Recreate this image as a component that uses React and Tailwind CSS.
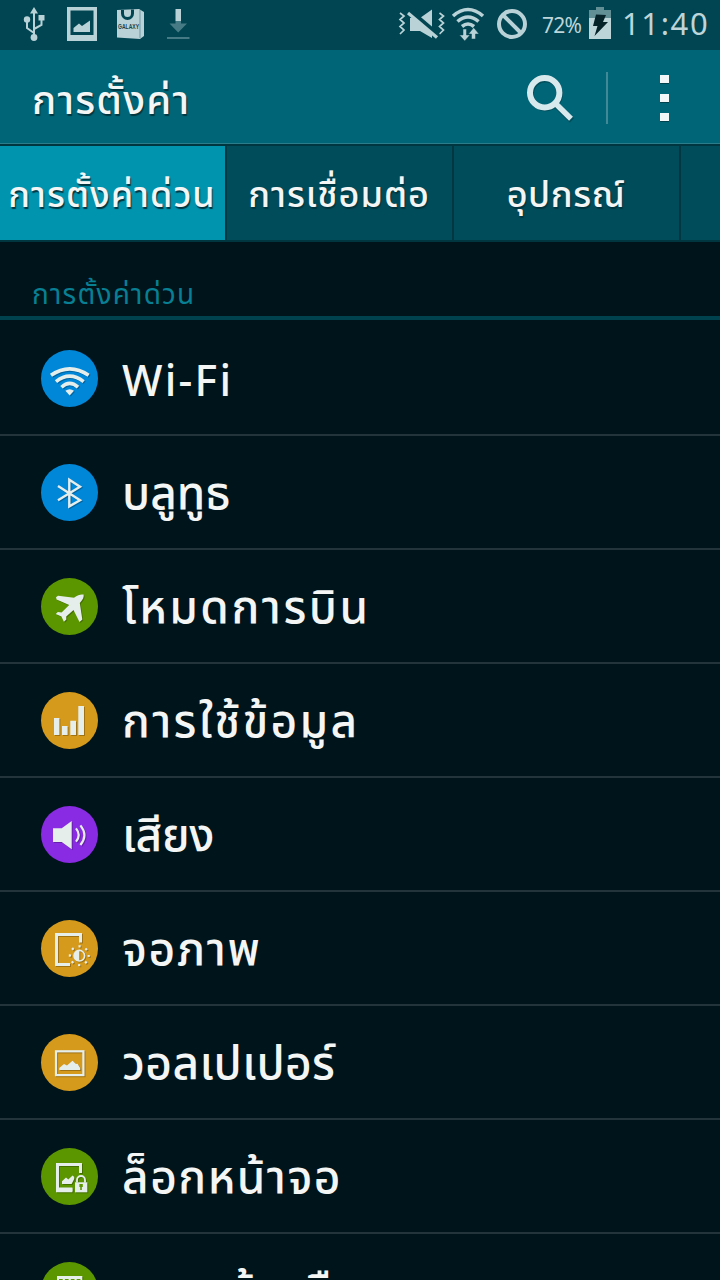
const thai = "font-['Noto_Sans_Thai','Noto_Sans',sans-serif]";

const ink = '#e6eeec';

function Wifi() {
  return (
    <g fill="none" stroke={ink} strokeWidth="3.6">
      <path d="M10 25.2Q28.7 12.4 47.6 25.2" />
      <path d="M15 31.6Q28.7 20.6 42.6 31.6" />
      <path d="M20.5 37.2Q28.7 29.6 37 37.2" />
      <path d="M24.4 40.8Q28.7 37.6 33 40.8L28.7 45.4Z" fill={ink} stroke="none" />
    </g>
  );
}
function Bluetooth() {
  return <path d="M17 22L39 36.3L28.3 42.4V15.8L39 22.7L17 36.3" fill="none" stroke={ink} strokeWidth="2.4" />;
}
function Plane() {
  return (
    <path fill={ink} d="M42.6 16.6C43 19.4 42 21.6 38.8 25L41.3 41.6L38.5 44L32.5 32L25.2 38.4L25.3 41.4L22.9 43.8L20.4 38.6L14.8 36L16.8 34L20.6 34.4L28.2 27L15.6 21.4L15 19.2L17 17.8L33 19.8C37 16.8 40 16 42.6 16.6Z" />
  );
}
function Bars() {
  return <path fill={ink} d="M13 26h5.4v17H13zM21 34h5.6v9H21zM29.3 28.7H35V43h-5.7zM37.3 14H43v29h-5.7z" />;
}
function Sound() {
  return (
    <g>
      <path d="M12 22.3h8.7L30.7 15v28.3L20.7 36H12z" fill={ink} />
      <path d="M35 22.4q5.4 6.6 0 13.2M39.4 19.4q8 9.8 0 19.6" fill="none" stroke={ink} strokeWidth="2.2" />
    </g>
  );
}
function Display() {
  return (
    <g fill="none" stroke={ink}>
      <path d="M39.5 22.6V14.6H15.5V44.4H29" strokeWidth="3" />
      <circle cx="38.3" cy="35.7" r="5.3" strokeWidth="1.6" />
      <path d="M38.3 30.4a5.300 5.300 0 0 0 0 10.600z" fill={ink} stroke="none" />
      <circle cx="38.3" cy="35.7" r="9.4" strokeWidth="2.200" strokeDasharray="2.200 5.183" strokeDashoffset="1.100" />
    </g>
  );
}
function Wallpaper() {
  return (
    <g>
      <rect x="15" y="17.3" width="27.4" height="23.8" fill="none" stroke={ink} strokeWidth="2.2" />
      <path d="M18.3 36V34L23 30L26 31.5L31.5 26.8L35 30L36.5 29.8L39.2 34V36Z" fill={ink} />
    </g>
  );
}
function Lock() {
  return (
    <g>
      <path d="M39.5 25V16.5H16.5V41.8H31.4" fill="none" stroke={ink} strokeWidth="3" />
      <path d="M15 39.4H31.4V44.3H15zM21 36V33.3L25 29.6L27.3 31.6L31.6 27.6L33.2 29V31L30.6 36Z" fill={ink} />
      <path d="M36 34.4V32a4 4 0 0 1 8 0v2.4" fill="none" stroke={ink} strokeWidth="1.8" />
      <path d="M34 34.3H46.3V44.3H34z" fill={ink} />
      <path d="M38.4 36h3.4v3h-1v3h-1.6v-3h-.8z" fill="#5b9600" />
    </g>
  );
}
function Panel() {
  return (
    <g>
      <path d="M16 14h25.3v30H16z" fill={ink} />
      <path d="M18 18.4h21.4" stroke="#5b9600" strokeWidth="2.8" strokeDasharray="3.7 2.2" />
    </g>
  );
}

const rows = [
  { label: 'Wi-Fi', Icon: Wifi, bg: 'bg-[#0087d8]', text: "font-['Noto_Sans'] text-[43px] tracking-[2.2px] pt-[3px]" },
  { label: 'บลูทูธ', Icon: Bluetooth, bg: 'bg-[#0087d8]', text: 'text-[46px] tracking-[0px] pt-[6px]' },
  { label: 'โหมดการบิน', Icon: Plane, bg: 'bg-[#5b9600]', text: 'text-[46px] tracking-[2.5px] pt-[6px]' },
  { label: 'การใช้ข้อมูล', Icon: Bars, bg: 'bg-[#d59a1b]', text: 'text-[46px] tracking-[2.3px] pt-[6px]' },
  { label: 'เสียง', Icon: Sound, bg: 'bg-[#892be2]', text: 'text-[46px] tracking-[-0.3px] pt-[6px]' },
  { label: 'จอภาพ', Icon: Display, bg: 'bg-[#d59a1b]', text: 'text-[46px] tracking-[1.7px] pt-[6px]' },
  { label: 'วอลเปเปอร์', Icon: Wallpaper, bg: 'bg-[#d59a1b]', text: 'text-[46px] tracking-[0.4px] pt-[6px]' },
  { label: 'ล็อกหน้าจอ', Icon: Lock, bg: 'bg-[#5b9600]', text: 'text-[46px] tracking-[1.5px] pt-[6px]' },
  { label: 'การแจ้งเตือน', Icon: Panel, bg: 'bg-[#5b9600]', text: 'text-[46px] tracking-[3px] pt-[6px]' },
];

function StatusBar() {
  return (
    <div className="flex h-[50px] shrink-0 items-center bg-[#004551] text-[#bdd5d9]">
      <svg className="h-[50px] w-[200px]" viewBox="0 0 200 50" fill="none" stroke="#b8d2d7">
        <path d="M34 12V38M34 33L27 28V20M34 29L41.500 25V18" strokeWidth="2" />
        <path d="M34 7L38 13.500H30zM38.500 15h6v5.500h-6z" fill="#b8d2d7" stroke="none" />
        <circle cx="27" cy="19.500" r="3.200" fill="#b8d2d7" stroke="none" />
        <circle cx="34" cy="37.500" r="3.400" fill="#b8d2d7" stroke="none" />
        <path d="M67 7H97V41H67zM70.500 10.500V35H93.500V10.500z" fill="#b8d2d7" fillRule="evenodd" stroke="none" />
        <path d="M73.500 32V28L79 23.500L82 26L90 20.500V32z" fill="#b8d2d7" stroke="none" />
        <path d="M117 10L139 9L144 12V36L140 39L117 37.500z" fill="#b8d2d7" stroke="none" />
        <path d="M140 10V38" stroke="#6f979f" strokeWidth="1" />
        <path d="M122.500 10V13.500a5 5 0 0 0 10 0V9.500" stroke="#004551" strokeWidth="3" />
        <text x="118" y="29" fontSize="7" fontFamily="Liberation Sans" fontWeight="bold" fill="#12454f" stroke="none" textLength="21" lengthAdjust="spacingAndGlyphs">GALAXY</text>
        <path d="M175.500 9h5.500v12h-5.500z" fill="#b8d2d7" stroke="none" />
        <path d="M175.500 21H181V23.500H187L178.200 32.500L169.500 23.500H175.500zM167 37h22.500v2H167z" fill="#467b85" stroke="none" />
      </svg>
      <svg className="ml-[190px] h-[50px] w-[145px]" viewBox="390 0 145 50" fill="none" stroke="#b8d2d7">
        <path d="M400 13L404 16L400 19.500L404 23L400 26.500L404 30L400 34M439.500 13L443.500 16L439.500 19.500L443.500 23L439.500 26.500L443.500 30L439.500 34" strokeWidth="1.700" />
        <path d="M410 18H420L432 9.500V38L420 31H410z" fill="#b8d2d7" stroke="none" />
        <path d="M409 10.500L438 35" stroke="#004551" strokeWidth="5" />
        <path d="M408 13L437 37.500" strokeWidth="3.200" />
        <path d="M453 16Q468 3 483 16M457.500 21.500Q468 12.500 478.500 21.500M462 26.500Q468 21.500 474 26.500" strokeWidth="3.600" />
        <path d="M463 29H466.500V35H470L464.700 41L459.500 35H463zM471.500 39V34H468.500L473.700 27.500L479 34H475.500V39z" fill="#b8d2d7" stroke="#004551" strokeWidth=".5" />
        <circle cx="512" cy="24" r="13" strokeWidth="4" />
        <path d="M503 15L521 33" strokeWidth="4" />
      </svg>
      <span className="ml-[7px] w-[46px] font-['Noto_Sans'] text-[21px] leading-none tracking-[-0.7px]">72%</span>
      <svg className="h-[50px] w-6" viewBox="587 0 24 50">
        <path d="M595 7h8v3h7v8h-22v-8h7z" fill="#628e96" />
        <path d="M588 18h22v21h-22z" fill="#bdd5d9" />
        <path d="M595 14.500L605 15L602 22H607L593.500 36L596.500 26H592z" fill="#052329" />
      </svg>
      <span className="ml-[10px] mb-1 whitespace-nowrap font-['Noto_Sans'] text-[31px] leading-none tracking-[1.6px]">11:40</span>
    </div>
  );
}

const tabs = [
  { label: 'การตั้งค่าด่วน', cls: 'w-[225px] bg-[#0094af] tracking-[1px]' },
  { label: 'การเชื่อมต่อ', cls: 'w-[227px] bg-[#004c5a] tracking-[1px]' },
  { label: 'อุปกรณ์', cls: 'w-[227px] bg-[#004c5a] tracking-[0.6px]' },
  { label: '', cls: 'w-[41px] bg-[#004c5a]' },
];

export default function App() {
  return (
    <div className={`flex h-[1280px] w-[720px] flex-col overflow-hidden bg-[#00141b] text-[#f4f5f5] ${thai}`}>
      <StatusBar />
      <header className="flex h-[94px] shrink-0 items-center border-b border-[#2c7d8b] bg-[#006677]">
        <h1 className="ml-8 w-[484px] whitespace-nowrap pt-[10px] text-[40px] font-medium leading-[60px] tracking-[1.2px] [text-shadow:1px_2px_1px_#003640]">การตั้งค่า</h1>
        <svg className="h-[94px] w-[204px]" viewBox="516 50 204 94" fill="none">
          <g stroke="#003f4b" opacity=".6"><circle cx="545.500" cy="94" r="14.500" strokeWidth="6" /><path d="M556 105L572 120.500" strokeWidth="6" /></g>
          <g stroke="#d8e9ed"><circle cx="544.700" cy="92.700" r="14.700" strokeWidth="6" /><path d="M555 103L571 118.700" strokeWidth="5.500" /></g>
          <path d="M607 72V124" stroke="#408996" strokeWidth="2" />
          <path d="M660 76h9v8h-9zM660 95h9v8h-9zM660 114h9v8h-9z" fill="#00424e" />
          <path d="M660 75h9v8h-9zM660 94h9v8h-9zM660 113h9v8h-9z" fill="#f3f6f6" />
        </svg>
      </header>
      <nav className="flex h-[98px] shrink-0 border-y-2 border-[#003640] bg-[#003640]">
        {tabs.map((t, i) => (
          <div key={i} className={`flex shrink-0 items-center justify-center border-[#003640] ${i > 0 ? 'border-l-2' : ''} ${t.cls}`}>
            <span className="mr-[1px] whitespace-nowrap pt-[6px] text-[36px] font-medium leading-[60px] [text-shadow:1px_2px_1px_#003640]">{t.label}</span>
          </div>
        ))}
      </nav>
      <div className="flex h-[78px] shrink-0 items-end border-b-4 border-[#00424e] pl-8">
        <h2 className="whitespace-nowrap text-[28px] leading-[41px] tracking-[1.200px] text-[#087f93]">การตั้งค่าด่วน</h2>
      </div>
      <main className="flex flex-col pt-[2px]">
        {rows.map(({ label, Icon, bg, text }) => (
          <div key={label} className="flex h-[114px] shrink-0 items-center border-b-2 border-[#24343b] pl-[41px]">
            <div className={`size-[57px] shrink-0 rounded-full ${bg}`}>
              <svg className="size-[58px] drop-shadow-[1px_1px_0px_rgba(0,0,0,0.25)]" viewBox="0 0 58 58"><Icon /></svg>
            </div>
            <span className={`ml-6 whitespace-nowrap font-medium leading-[80px] ${text}`}>{label}</span>
          </div>
        ))}
      </main>
    </div>
  );
}
